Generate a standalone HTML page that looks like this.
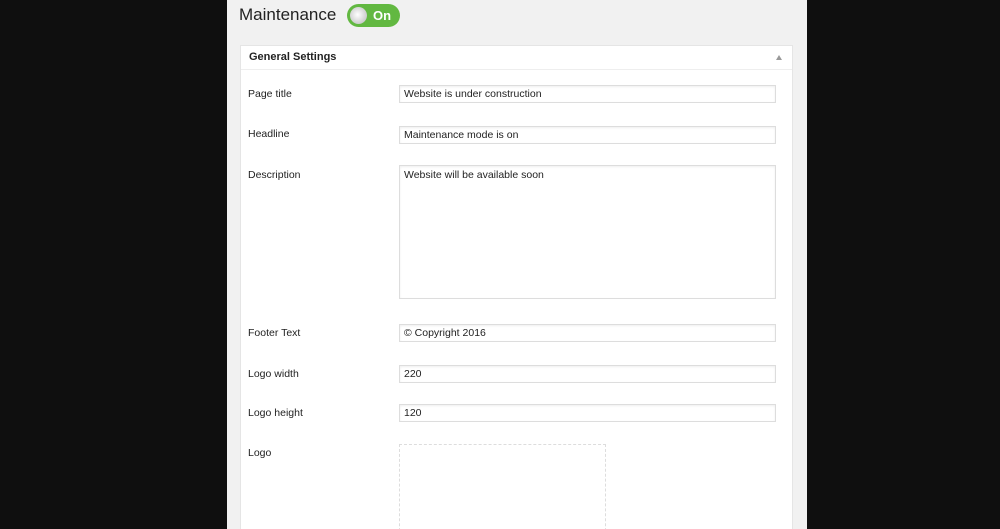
<!DOCTYPE html>
<html><head><style>
html,body{margin:0;width:1000px;height:529px;overflow:hidden;}
body{background:#0f0f0f;position:relative;font-family:"Liberation Sans",sans-serif;}
.panel{position:absolute;left:227px;top:0;width:580px;height:529px;background:#f1f1f1;}
.h1{position:absolute;left:239px;top:5px;font-size:17px;color:#222;}
.tog{position:absolute;left:347px;top:4px;width:53px;height:23px;border-radius:12px;background:#62b841;}
.knob{position:absolute;left:3px;top:3px;width:17px;height:17px;border-radius:50%;background:radial-gradient(circle at 45% 45%,#fff,#ccc 70%,#aaa);}
.on{position:absolute;left:26px;top:4px;color:#fff;font-size:13px;font-weight:bold;}
.box{position:absolute;left:240px;top:45px;width:551px;height:484px;background:#fff;border:1px solid #e5e5e5;border-bottom:0;}
.hd{height:23px;border-bottom:1px solid #eee;font-size:11px;font-weight:bold;color:#222;line-height:23px;padding-left:8px;position:relative;}
.arr{position:absolute;right:10px;top:9px;width:0;height:0;border-left:3px solid transparent;border-right:3px solid transparent;border-bottom:5px solid #999;}
.lb{position:absolute;left:248px;font-size:10.5px;color:#222;}
.in{position:absolute;left:399px;width:371px;height:16px;border:1px solid #ddd;box-shadow:inset 0 1px 2px rgba(0,0,0,.07);font-size:10.5px;color:#222;line-height:16px;padding-left:4px;box-sizing:content-box;background:#fff;}
</style></head><body>
<div class="panel"></div>
<div class="h1">Maintenance</div>
<div class="tog"><div class="knob"></div><div class="on">On</div></div>
<div class="box"><div class="hd">General Settings<div class="arr"></div></div></div>
<div class="lb" style="top:88px">Page title</div>
<div class="in" style="top:85px">Website is under construction</div>
<div class="lb" style="top:128px">Headline</div>
<div class="in" style="top:126px">Maintenance mode is on</div>
<div class="lb" style="top:169px">Description</div>
<div class="in" style="top:165px;height:132px;line-height:18px">Website will be available soon</div>
<div class="lb" style="top:327px">Footer Text</div>
<div class="in" style="top:324px">© Copyright 2016</div>
<div class="lb" style="top:368px">Logo width</div>
<div class="in" style="top:365px">220</div>
<div class="lb" style="top:407px">Logo height</div>
<div class="in" style="top:404px">120</div>
<div class="lb" style="top:447px">Logo</div>
<div style="position:absolute;left:399px;top:444px;width:205px;height:100px;border:1px dashed #ddd;"></div>
</body></html>
